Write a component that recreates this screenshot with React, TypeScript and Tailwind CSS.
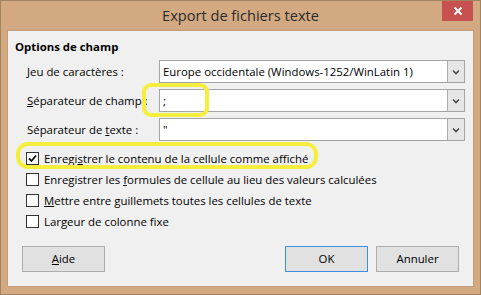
import type { ReactNode } from 'react';

const FONT = { fontFamily: '"Open Sans", "Noto Sans", sans-serif' };

function Combo({ value }: { value: string }) {
  return (
    <div className="flex h-[23px] w-[306px] border border-[#a5a5a5] bg-white">
      <div className="flex-1 pl-[3px] text-[11.4px] leading-[21px] text-black">{value}</div>
      <div className="flex w-[17px] items-center justify-center border-l border-[#adadad] bg-[#e6e6e6]">
        <svg width="8" height="6" viewBox="0 0 8 6">
          <path d="M1 1.5 L4 4.5 L7 1.5" fill="none" stroke="#4a4a4a" strokeWidth="1.6" />
        </svg>
      </div>
    </div>
  );
}

function Row({ label, value }: { label: ReactNode; value: string }) {
  return (
    <div className="flex h-[23px] items-center">
      <div className="w-[144px] pl-[12px] text-[11.4px] text-black">{label}</div>
      <Combo value={value} />
    </div>
  );
}

function Check({ checked, children }: { checked?: boolean; children: ReactNode }) {
  return (
    <div className="flex h-[13px] items-center">
      <div className="flex h-[13px] w-[13px] items-center justify-center border border-[#333] bg-white">
        {checked && (
          <svg width="9" height="9" viewBox="0 0 9 9">
            <path d="M1 4.5 L3.5 7 L8 1.5" fill="none" stroke="#111" strokeWidth="1.8" />
          </svg>
        )}
      </div>
      <span className="ml-[5px] text-[11.4px] text-black">{children}</span>
    </div>
  );
}

function Btn({ children, focus }: { children: ReactNode; focus?: boolean }) {
  return (
    <div
      className={`flex h-[26px] w-[83px] items-center justify-center border bg-[#e1e1e1] text-[11.4px] text-black ${
        focus ? 'border-[#3c8ee0]' : 'border-[#adadad]'
      }`}
    >
      {children}
    </div>
  );
}

export default function App() {
  return (
    <div style={FONT} className="relative flex h-[295px] w-[481px] flex-col border border-[#a3825f] bg-[#d3a982]">
      {/* title bar */}
      <div className="relative flex h-[29px] items-center justify-center">
        <span className="mt-[1px] text-[14.6px] text-[#2b2b2b]">Export de fichiers texte</span>
        <div className="absolute right-[7px] top-0 flex h-[20px] w-[31px] items-center justify-center bg-[#c75050]">
          <svg width="10" height="10" viewBox="0 0 10 10">
            <path d="M1.5 1.5 L8.5 8.5 M8.5 1.5 L1.5 8.5" stroke="white" strokeWidth="2" />
          </svg>
        </div>
      </div>

      {/* client area */}
      <div className="mx-[6px] flex h-[257px] flex-col border border-[#c49c76] bg-[#f0f0f0] pl-[7px]">
        <div className="mt-[8px] text-[11.4px] font-bold leading-[16px] text-black">Options de champ</div>
        <div className="mt-[5px] flex flex-col gap-[6px]">
          <Row label={<><u>J</u>eu de caractères :</>} value="Europe occidentale (Windows-1252/WinLatin 1)" />
          <Row label={<><u>S</u>éparateur de champ :</>} value=";" />
          <Row label={<>Séparateur de <u>t</u>exte :</>} value={'"'} />
        </div>
        <div className="ml-[11px] mt-[11px] flex flex-col gap-[8px]">
          <Check checked>Enregi<u>s</u>trer le contenu de la cellule comme affiché</Check>
          <Check>Enregistrer les <u>f</u>ormules de cellule au lieu des valeurs calculées</Check>
          <Check><u>M</u>ettre entre guillemets toutes les cellules de texte</Check>
          <Check>Largeur de colonne f<u>i</u>xe</Check>
        </div>
        <div className="mt-[18px] flex items-center justify-between pl-[7px] pr-[14px]">
          <Btn><u>A</u>ide</Btn>
          <div className="flex gap-[8px]">
            <Btn focus>OK</Btn>
            <Btn>Annuler</Btn>
          </div>
        </div>
      </div>

      {/* yellow annotations */}
      <div className="pointer-events-none absolute left-[141px] top-[82px] h-[34px] w-[67px] rounded-[9px] border-[4px] border-[#f6ee3c]" />
      <div className="pointer-events-none absolute left-[15px] top-[141px] h-[27px] w-[302px] rounded-[12px] border-[4px] border-[#f6ee3c]" />
    </div>
  );
}
